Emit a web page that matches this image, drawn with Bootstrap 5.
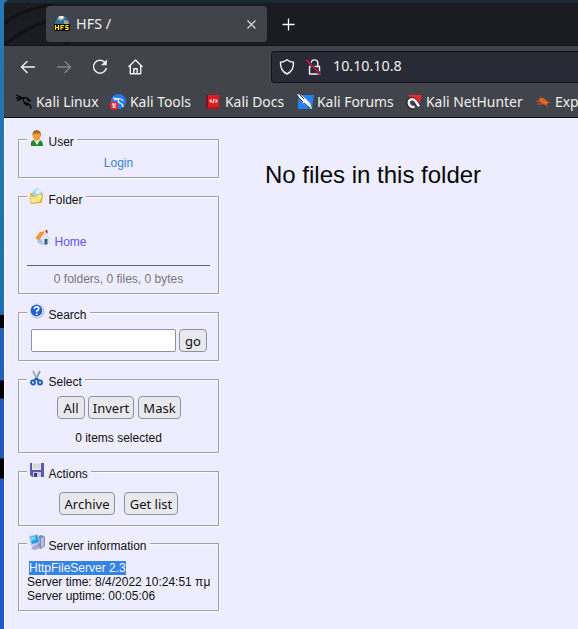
<!DOCTYPE html>
<html lang="en">
<head>
<meta charset="utf-8">
<title>HFS /</title>
<link href="https://cdn.jsdelivr.net/npm/bootstrap@5.3.0/dist/css/bootstrap.min.css" rel="stylesheet">
<style>
html,body{height:100%;overflow:hidden}
body{font-family:"Noto Sans",sans-serif;color:#f0f0ea;background:linear-gradient(#2777b2 0,#1c72ad 300px,#206bb8 315px,#000 315px,#000 328px,#255fb8 328px,#245fbd 380px,#000 381px,#000 398px,#2257bd 399px,#2257bd 458px,#000 459px,#000 478px,#2259c6 479px)}
.desk{height:629px;padding-left:4px}
.browser{height:629px;overflow:hidden;border-top-left-radius:6px;background:#1b1c21}
.tabstrip{height:46px;border-top:3px solid #1b2935;background:#1b1c21;position:relative;border-bottom:1px solid #111216}
.scales{position:absolute;left:0;top:0}
.page-tab{margin:3px 0 0 42px;width:221px;height:36px;background:#42444c;border-radius:4px;position:relative;padding:0 10px 0 8px}
.tab-title{font-size:14.4px;margin-left:6px;line-height:36px}
.plus{margin:10px 0 0 13px;position:relative}
.toolbar{height:41px;background:#42444c}
.navset{width:267px;padding-left:14px;gap:16px}
.address{height:32px;background:#282a36;border:1px solid #111217;border-right:0;border-radius:4px 0 0 4px;padding-left:7px;font-size:14.3px}
.ip{margin:-1px 0 0 -2px}
.marks{height:31px;background:#42444c;border-bottom:1px solid #0c0c0e;padding-left:12px;font-size:13.9px;white-space:nowrap}
.bm{flex:none;line-height:30px}
.bm svg{margin-right:4px;flex:none}
.view{height:511px;background:#eeedff;border-left:1px solid #fafaff;color:#111;font:12px/14px "Liberation Sans",Arial,sans-serif}
.side{width:215px;padding:21px 0 0 13px;flex:none}
.panel{width:201px;border:1px solid #a1a1a1;box-shadow:inset 1px 1px #fafaff,1px 1px #fafaff;margin-bottom:18px}
.cap{background:#eeedff;width:max-content;height:20px;margin:-12px 0 0 8px;padding:0 3px 0 2px;position:relative;display:flex}
.cap svg{flex:none;margin:2px 3.5px 0 0}
.cap span{line-height:14px;padding-top:7px}
.h-user{height:39px}.h-folder{height:98px}.h-search{height:49px}.h-select{height:74px}.h-actions{height:55px;margin-bottom:17px}.h-server{height:68px}
.h-user .cap svg{margin-top:1px}
.h-folder .cap{margin-top:-11px}
.login{color:#407fd3;text-decoration:none;margin-top:8px}
.home{color:#6252fa;text-decoration:none}
.stats{border-top:1px solid #62626b;margin:12px 8px 0;padding-top:6px;color:#777}
.query{width:145px;height:23px;border:1px solid #9090a0;border-radius:2px;background:#fff;padding:0}
.hbtn{font:13px/18px "Noto Sans",sans-serif;height:23px;padding:1px 0;border:1px solid #8f8f9d;border-radius:4px;background:#e9e9ed;color:#111;text-align:center}
.pick{background:#3584e4;color:#f4f4ff}
.empty{font-size:24px;line-height:28px;margin:43px 0 0 45px;color:#050508;white-space:nowrap}
#b1{width:94px}#b2{width:95px}#b3{width:92px}#b4{width:109px}#b4 svg{margin-right:3px}#b5{width:129px}
#home{margin:22px 0 0 16px;height:25px}#home svg{margin:2px 3.500px 0 0}#home span{padding-top:7px}
#find{margin:8px 0 0 12px;gap:3px}#go{width:28px}
#choose{margin:8px 0 0 38px;gap:3px}#all{width:28px}#inv{width:46px}#mask{width:43px;margin-left:1px}
#count{margin-top:12px}
#acts{margin:12px 0 0 40px;gap:9px}#arc{width:56px}#list{width:54px}
#info{margin:9px 0 0 8px;white-space:nowrap}#info .pick{margin-left:2px}
</style>
<script src="https://cdn.jsdelivr.net/npm/bootstrap@5.3.0/dist/js/bootstrap.bundle.min.js"></script>
</head>
<body>
<div class="desk">
<div class="browser">
  <div class="tabstrip d-flex">
    <svg class="scales" width="80" height="42" fill="none" stroke="#111216" stroke-width="3"><path d="M0 21Q18 5 48 2M0 42Q20 26 43 18M60 42Q66 38 70 34"/><path d="M0 17Q22 2 44 0M2 35Q20 19 43 13" stroke="#202126" stroke-width="1"/></svg>
    <div class="page-tab d-flex align-items-center">
      <svg width="16" height="16" viewBox="0 0 16 16"><circle cx="8" cy="7" r="7" fill="#2c6ca8"/><path d="M3 3q4-4 8-2l-2 3-3 1zM10 4l4 1 1 4-5-1z" fill="#a7a77b"/><path d="M4 1q4-2 6 0l-2 2-3-1z" fill="#fff"/><path fill="#150500" d="M0 8h16v7H0z"/><path d="M1.500 9v5M4.500 9v5M1.500 11.500h3M7 14V9.500h3M7 11.500h2.500M14.500 9.500H12v2h2v2h-3" fill="none" stroke="#ffec18" stroke-width="1.200"/></svg>
      <span class="tab-title">HFS /</span>
      <svg class="ms-auto" width="11" height="11" viewBox="0 0 11 11"><path d="M1.500 1.500l8 8m0-8l-8 8" stroke="#dedee0" stroke-width="1.100"/></svg>
    </div>
    <svg class="plus" width="16" height="22" viewBox="0 0 16 22"><path d="M8.500 5.500v12M2.500 11.500h12" stroke="#f5f5f3" stroke-width="1.300"/></svg>
  </div>
  <div class="toolbar d-flex align-items-center">
    <div class="navset d-flex flex-shrink-0">
      <svg width="20" height="20" viewBox="0 0 20 20" fill="none" stroke="#f2f2ef" stroke-width="1.400"><path d="M16.500 10H4M9 4.500L3.500 10 9 15.500" stroke-linecap="round"/></svg>
      <svg width="20" height="20" viewBox="0 0 20 20" fill="none" stroke="#83848a" stroke-width="1.400"><path d="M3.500 10h12.500M11 4.500l5.500 5.500-5.500 5.500" stroke-linecap="round"/></svg>
      <svg width="20" height="20" viewBox="0 0 20 20" fill="none" stroke="#f2f2ef" stroke-width="1.400"><path d="M15 5.500A6.500 6.500 0 1 0 16.400 11"/><path d="M16.800 2.500v5.800H11z" fill="#f2f2ef" stroke="none"/></svg>
      <svg width="20" height="20" viewBox="0 0 20 20" fill="none" stroke="#f2f2ef" stroke-width="1.400" stroke-linejoin="round"><path d="M2.500 10L9.500 3l7 7M4.300 8.800v7.900h10.400V8.800M7.800 16.500v-4.800h3.400v4.800"/></svg>
    </div>
    <div class="address flex-grow-1 d-flex align-items-center">
      <svg width="16" height="18" viewBox="0 0 16 18" fill="none" stroke="#f2f2ef" stroke-width="1.400"><path d="M8 1.700Q11 4 14.500 4.200 15 12.500 8 16 1 12.500 1.500 4.200 5 4 8 1.700z" stroke-linejoin="round"/></svg>
      <svg class="ms-2 me-2" width="24" height="18" viewBox="-1 0 24 18" fill="none" stroke="#f2f2ef" stroke-width="1.400"><path d="M5.500 8.500h10v7.500h-10zM7.200 8.500V5.200a3.300 3.300 0 0 1 6.600 0v3.300"/><path d="M3 2.500l13 13.500" stroke="#282a36" stroke-width="3.200"/><path d="M2.500 2l14 14.500" stroke="#e7104c" stroke-width="1.400"/></svg>
      <span class="ip">10.10.10.8</span>
    </div>
  </div>
  <div class="marks d-flex align-items-center">
    <span class="bm d-flex align-items-center" id="b1"><svg width="16" height="16" viewBox="0 0 16 16" fill="none" stroke="#070709" stroke-width="1.300"><path d="M0 1l5 2 3 1M0 4l5 0M1 7q3-3 7-3-2 4 2 5 5 1 5 6M7 4q5-1 6 2l2 1-4-1M8 9q2 2 4 2"/></svg>Kali Linux</span>
    <span class="bm d-flex align-items-center" id="b2"><svg width="16" height="16" viewBox="0 0 16 16"><circle cx="8.500" cy="7.500" r="7.500" fill="#247bf5"/><path d="M3 4l6 1q-2 3 1 4 3 1 3 4M4 6l4-1q4-1 5 2" fill="none" stroke="#f7faff" stroke-width="1.200"/><rect x="0" y="7.500" width="8" height="8" rx="3" fill="#e82832"/><path d="M2 10h4M3.200 10v4M5 10v4" stroke="#fff" fill="none"/></svg>Kali Tools</span>
    <span class="bm d-flex align-items-center" id="b3"><svg width="16" height="16" viewBox="0 0 16 16"><path d="M1 1h3v14H1z" fill="#6e171c"/><path d="M3 1h11v12H3z" fill="#e41920"/><path d="M2 13h12v2H2z" fill="#a51a20"/><path d="M6.500 5.500L5 7l1.500 1.500M10.500 5.500L12 7l-1.500 1.500M9 5L8 9" fill="none" stroke="#fff" stroke-width="1.200"/></svg>Kali Docs</span>
    <span class="bm d-flex align-items-center" id="b4"><svg width="17" height="16" viewBox="0 0 17 16"><path d="M1 1h16l-2 14H1z" fill="#2780f6"/><path d="M0 0l4 1 5 4 4 4 2 6-5-3-5-4z" fill="#f5f5ed"/><path d="M0 2l6 6M3 1l4 4M7 9l6 5" stroke="#25272a" stroke-width=".9"/></svg>Kali Forums</span>
    <span class="bm d-flex align-items-center" id="b5"><svg width="16" height="16" viewBox="0 0 16 16"><path d="M2 1h14l-3 11z" fill="#f2252e"/><path d="M13 13L9.500 7Q5 3 2.500 7q-1 5 3.500 6.500h2" fill="none" stroke="#222" stroke-width="4"/><path d="M13 12.500L9.500 7Q5.500 3.500 3 7q-1 4.500 3 6h2.500" fill="none" stroke="#f6f5f3" stroke-width="2.600"/></svg>Kali NetHunter</span>
    <span class="bm d-flex align-items-center" id="b6"><svg width="16" height="16" viewBox="0 0 16 16"><path d="M3 5l5-1 5 4-1 3-5-1z" fill="#ed6519"/><path d="M1 7l4 1M2 10l5 0M7 4l-2-1M12 9l3-1M11 11l2 2M5 5l5 6" stroke="#d2601f" stroke-width=".9"/></svg>Exploit-DB</span>
  </div>
  <main class="view d-flex">
    <div class="side">
      <section class="panel h-user">
        <div class="cap"><svg width="16" height="18" viewBox="0 0 16 18"><path d="M2 17Q1 11 5 11h5q4 0 4 6z" fill="#218b2c"/><path d="M5 11l3 5 3-5z" fill="#e8ffe2"/><ellipse cx="7.700" cy="7" rx="4" ry="4.800" fill="#f49b40"/><path d="M3.500 7Q3 1 7.700 1T12 7L10.500 4.500h-5.500z" fill="#a6662a"/></svg><span>User</span></div>
        <div class="text-center"><a class="login d-inline-block" href="#">Login</a></div>
      </section>
      <section class="panel h-folder">
        <div class="cap"><svg width="16" height="18" viewBox="0 0 16 18"><path d="M1 5h3l2-1 8 2-1 9-11 1z" fill="#e2ba48"/><path d="M3 4l5-4 6 5-4 5-5-1z" fill="#a4d4f4"/><path d="M6 4l3-3 3 3-3 3z" fill="#d8f2ff"/><path d="M1 8l5 1 4-3 4 1-3 7-9 1.500z" fill="#fae786" stroke="#d0a83e" stroke-width=".6"/></svg><span>Folder</span></div>
        <a class="home d-flex" href="#" id="home"><svg width="16" height="16" viewBox="0 0 16 16"><path d="M2 8l8-5 5 6v5l-5 2-7-3z" fill="#d9e9f7"/><path d="M2 8l4 1 3 6-6-2z" fill="#a3c8e3"/><path d="M0 8l5-6 5-1-2 4-4 5z" fill="#f7963e"/><path d="M9 3l6 6" stroke="#e9d9d0" stroke-width="1.300"/><path d="M10.500 0h2v4l-2-2z" fill="#be322b"/><path d="M9.500 9h3v5l-3 1z" fill="#465982"/></svg><span>Home</span></a>
        <div class="stats text-center">0 folders, 0 files, 0 bytes</div>
      </section>
      <section class="panel h-search">
        <div class="cap"><svg width="16" height="18" viewBox="0 0 16 18"><circle cx="8" cy="8" r="7.500" fill="#aebbd0"/><circle cx="7.500" cy="7.500" r="6.900" fill="#eef5ff"/><circle cx="7.500" cy="7.500" r="5.900" fill="#265fd0"/><path d="M5.200 5.800q.3-2 2.500-2 2.300.2 2.100 2-.2 1.200-2 2v1.400M7.800 10.400v1.600" fill="none" stroke="#fff" stroke-width="1.600"/></svg><span>Search</span></div>
        <div class="d-flex" id="find"><input class="query" type="text"><button class="hbtn" id="go">go</button></div>
      </section>
      <section class="panel h-select">
        <div class="cap"><svg width="16" height="18" viewBox="0 0 16 18"><path d="M4 1l5 10M11 1L6 11" stroke="#8e99a8" stroke-width="1.800"/><path d="M4 1l4 8" stroke="#c7ced8" stroke-width=".7"/><g fill="none" stroke="#1560bf" stroke-width="1.800"><circle cx="4" cy="12.500" r="2"/><circle cx="11" cy="12.500" r="2"/><path d="M5 10l2.500-1.500L10 10"/></g></svg><span>Select</span></div>
        <div class="d-flex" id="choose"><button class="hbtn" id="all">All</button><button class="hbtn" id="inv">Invert</button><button class="hbtn" id="mask">Mask</button></div>
        <div class="text-center" id="count">0 items selected</div>
      </section>
      <section class="panel h-actions">
        <div class="cap"><svg width="16" height="18" viewBox="0 0 16 18"><path d="M1 1h14v14H3l-2-2z" fill="#5c59b6"/><path d="M3 1h9v7H3z" fill="#e7e7e9"/><path d="M4 3h7M4 5h7" stroke="#c9c9cf"/><path d="M4 10h8v5H4z" fill="#c9cbe5"/><path d="M5 11h3v4H5z" fill="#393878"/></svg><span>Actions</span></div>
        <div class="d-flex" id="acts"><button class="hbtn" id="arc">Archive</button><button class="hbtn" id="list">Get list</button></div>
      </section>
      <section class="panel h-server">
        <div class="cap"><svg width="16" height="18" viewBox="0 0 16 18"><path d="M9 2l4-1 3 2v9l-4 3-4-2z" fill="#8189b4"/><path d="M12 4l3-1v9l-3 2z" fill="#b7bddb"/><path d="M0 2l9-2 2 9-9 3z" fill="#b3cbef"/><path d="M1 3l7-2 2 7-7 2z" fill="#269de9"/><path d="M1.500 3.500L6 2l1 3-5 2z" fill="#78d7fc"/><path d="M4 12l5-2 2 4-5 2-4-1z" fill="#a6a9cc"/></svg><span>Server information</span></div>
        <div id="info"><span class="pick">HttpFileServer 2.3</span><br>Server time: 8/4/2022 10:24:51 πμ<br>Server uptime: 00:05:06</div>
      </section>
    </div>
    <h1 class="empty fw-normal">No files in this folder</h1>
  </main>
</div>
</div>
</body>
</html>
